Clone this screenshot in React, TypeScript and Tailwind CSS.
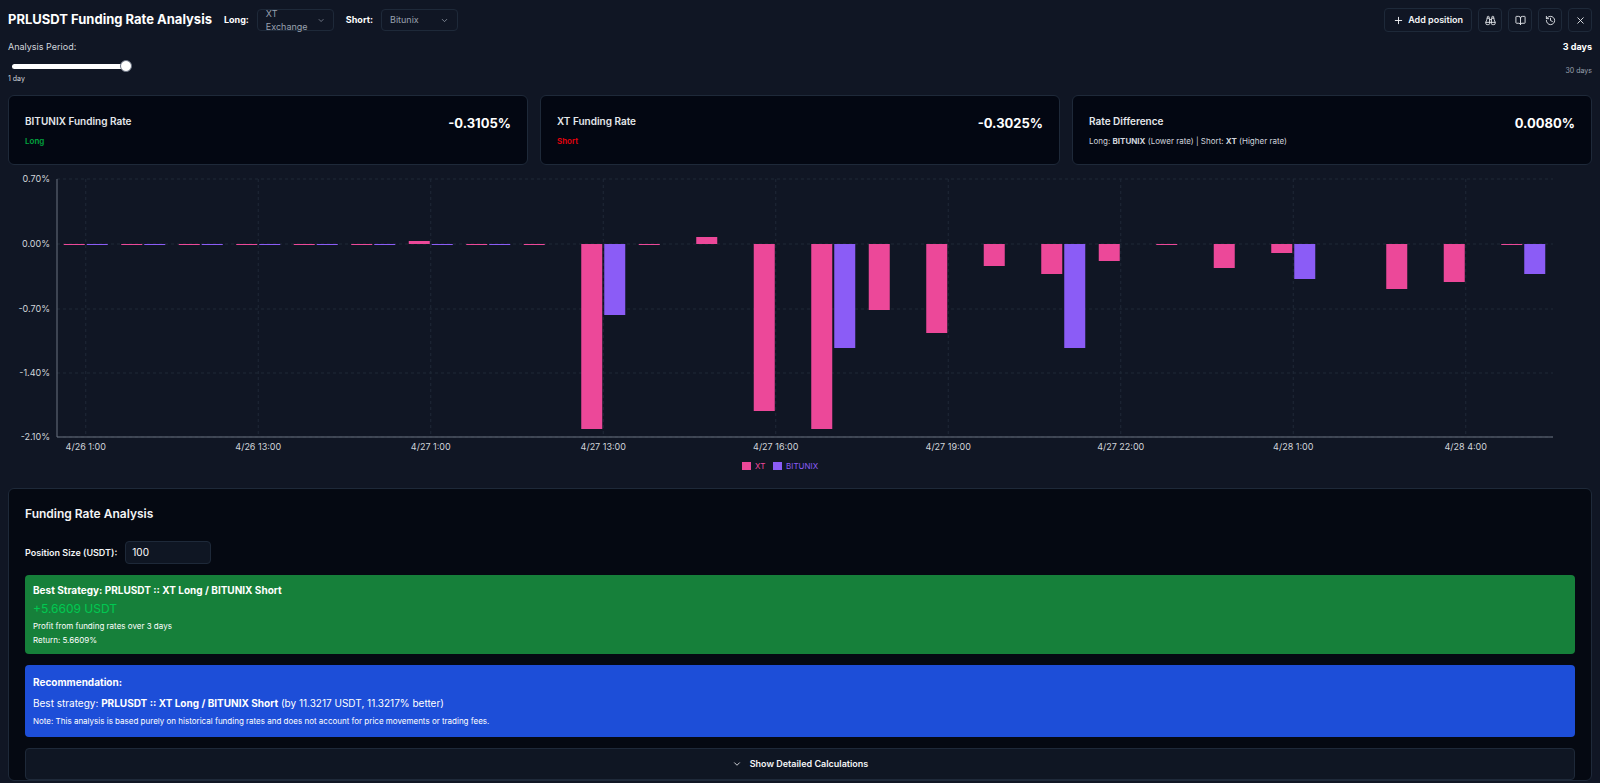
import { Plus, Binoculars, BookOpen, History, X, ChevronDown } from "lucide-react";

const font = { fontFamily: "Inter, 'Noto Sans', sans-serif" };

// [xt, bitunix] heights in px below(+)/above(-) zero
const bars: [number, number][] = [
  [1, 1], [1, 1], [1, 1], [1, 1], [1, 1], [1, 1], [-3, 1], [1, 1], [1, 0],
  [185, 71], [1, 0], [-7, 0], [167, 0], [185, 104], [66, 0], [89, 0], [22, 0],
  [30, 104], [17, 0], [1, 0], [24, 0], [9, 35], [0, 0], [45, 0], [38, 0], [1, 30],
];
const labels: [number, string][] = [
  [0, "4/26 1:00"], [3, "4/26 13:00"], [6, "4/27 1:00"], [9, "4/27 13:00"], [12, "4/27 16:00"],
  [15, "4/27 19:00"], [18, "4/27 22:00"], [21, "4/28 1:00"], [24, "4/28 4:00"],
];
const ticks: [number, string][] = [[175, "0.70%"], [240, "0.00%"], [305, "-0.70%"], [369, "-1.40%"], [433, "-2.10%"]];

function Chart() {
  const cx = (i: number) => 57 + 57.5 * (i + 0.5);
  const bar = (x: number, h: number, fill: string, k: string) => {
    if (h === 0) return null;
    const y = h > 0 ? 240 : 240 + h;
    return <rect key={k} x={x} y={y} width={21} height={Math.abs(h)} fill={fill} />;
  };
  return (
    <svg viewBox="8 170 1552 305" width={1552} height={305} className="block" style={font}>
      {ticks.map(([y, t]) => (
        <g key={t}>
          <line x1={57} x2={1553} y1={y} y2={y} stroke="#1f2937" strokeDasharray="3 3" />
          <text x={50} y={y + 3} fontSize={9} fill="#d1d5db" textAnchor="end">{t}</text>
        </g>
      ))}
      {labels.map(([i, t]) => (
        <g key={t}>
          <line x1={cx(i)} x2={cx(i)} y1={175} y2={433} stroke="#1f2937" strokeDasharray="3 3" />
          <text x={cx(i)} y={446} fontSize={9} fill="#d1d5db" textAnchor="middle">{t}</text>
        </g>
      ))}
      <line x1={57} x2={57} y1={175} y2={433} stroke="#6b7280" />
      <line x1={57} x2={1553} y1={433} y2={433} stroke="#6b7280" />
      {bars.map(([a, b], i) => [
        bar(cx(i) - 22, a, "#ec4899", `a${i}`),
        bar(cx(i) + 1, b, "#8b5cf6", `b${i}`),
      ])}
      <rect x={742} y={458} width={9} height={8} fill="#ec4899" />
      <text x={755} y={465} fontSize={8} fill="#ec4899">XT</text>
      <rect x={773} y={458} width={9} height={8} fill="#8b5cf6" />
      <text x={786} y={465} fontSize={8} fill="#8b5cf6">BITUNIX</text>
    </svg>
  );
}

function RateCard({ title, sub, subColor, value }: { title: string; sub: React.ReactNode; subColor: string; value: string }) {
  return (
    <div className="flex h-[70px] flex-1 items-start justify-between rounded-md border border-gray-800 bg-[#030712] px-4 pt-[18px]">
      <div>
        <div className="text-[10px] font-semibold text-gray-200">{title}</div>
        <div className={`mt-1.5 text-[8px] font-semibold ${subColor}`}>{sub}</div>
      </div>
      <div className="text-[13px] font-bold text-white">{value}</div>
    </div>
  );
}

const iconBtn = "flex h-6 w-6 items-center justify-center rounded border border-gray-800 text-gray-200";

export default function App() {
  return (
    <div className="h-[783px] overflow-hidden bg-[#101624] px-2 text-gray-200" style={font}>
      <div className="flex h-[40px] items-center justify-between">
        <div className="flex items-center gap-2">
          <h1 className="text-[13px] font-bold text-white">PRLUSDT Funding Rate Analysis</h1>
          <span className="ml-1 text-[9px] font-bold text-white">Long:</span>
          <div className="flex h-[22px] w-[77px] items-center justify-between rounded border border-gray-800 px-2 text-[9px] text-gray-400">
            XT Exchange <ChevronDown size={9} />
          </div>
          <span className="ml-1 text-[9px] font-bold text-white">Short:</span>
          <div className="flex h-[22px] w-[77px] items-center justify-between rounded border border-gray-800 px-2 text-[9px] text-gray-400">
            Bitunix <ChevronDown size={9} />
          </div>
        </div>
        <div className="flex items-center gap-1.5">
          <div className="flex h-6 items-center gap-1 rounded border border-gray-800 px-2 text-[9px] font-semibold text-gray-100">
            <Plus size={11} /> Add position
          </div>
          <div className={iconBtn}><Binoculars size={11} /></div>
          <div className={iconBtn}><BookOpen size={11} /></div>
          <div className={iconBtn}><History size={11} /></div>
          <div className={iconBtn}><X size={11} /></div>
        </div>
      </div>
      <div className="flex items-start justify-between">
        <div>
          <div className="text-[9px] text-gray-300">Analysis Period:</div>
          <div className="relative mt-1.5 h-[12px] w-[124px]">
            <div className="absolute left-1 top-[4px] h-[5px] w-[112px] rounded-full bg-white" />
            <div className="absolute right-0 top-0 h-3 w-3 rounded-full border border-gray-500 bg-white" />
          </div>
          <div className="mt-0.5 text-[7px] text-gray-300">1 day</div>
        </div>
        <div className="text-right">
          <div className="text-[9px] font-bold text-white">3 days</div>
          <div className="mt-3 text-[7px] text-gray-400">30 days</div>
        </div>
      </div>
      <div className="mt-[11px] flex gap-3">
        <RateCard title="BITUNIX Funding Rate" sub="Long" subColor="text-green-600" value="-0.3105%" />
        <RateCard title="XT Funding Rate" sub="Short" subColor="text-red-600" value="-0.3025%" />
        <RateCard
          title="Rate Difference"
          sub={<span className="font-normal">Long: <b>BITUNIX</b> (Lower rate) | Short: <b>XT</b> (Higher rate)</span>}
          subColor="text-gray-300"
          value="0.0080%"
        />
      </div>
      <div className="mt-[9px]"><Chart /></div>
      <div className="mt-[9px] rounded-md border border-gray-800 bg-[#050912] px-4 pt-4">
        <h2 className="text-[12px] font-semibold text-gray-100">Funding Rate Analysis</h2>
        <div className="mt-[18px] flex items-center gap-2">
          <span className="text-[9px] font-semibold text-gray-100">Position Size (USDT):</span>
          <div className="flex h-[23px] w-[86px] items-center rounded border border-gray-800 bg-[#0f1623] px-1.5 text-[10px] text-white">100</div>
        </div>
        <div className="mt-[11px] rounded bg-[#16803a] px-2 py-2">
          <div className="text-[10px] font-bold text-white">Best Strategy: PRLUSDT :: XT Long / BITUNIX Short</div>
          <div className="mt-0.5 text-[12px] text-green-500">+5.6609 USDT</div>
          <div className="mt-0.5 text-[8px] text-white">Profit from funding rates over 3 days</div>
          <div className="mt-0.5 text-[8px] text-white">Return: 5.6609%</div>
        </div>
        <div className="mt-[11px] rounded bg-[#1d4ed8] px-2 py-2.5">
          <div className="text-[10px] font-bold text-white">Recommendation:</div>
          <div className="mt-1.5 text-[10px] text-white">Best strategy: <b>PRLUSDT :: XT Long / BITUNIX Short</b> (by 11.3217 USDT, 11.3217% better)</div>
          <div className="mt-1 text-[8px] text-white">Note: This analysis is based purely on historical funding rates and does not account for price movements or trading fees.</div>
        </div>
        <div className="mt-[11px] flex h-8 items-center justify-center gap-2 rounded border border-gray-800 bg-[#0f1623] text-[9px] font-semibold text-gray-100">
          <ChevronDown size={10} /> Show Detailed Calculations
        </div>
      </div>
    </div>
  );
}
